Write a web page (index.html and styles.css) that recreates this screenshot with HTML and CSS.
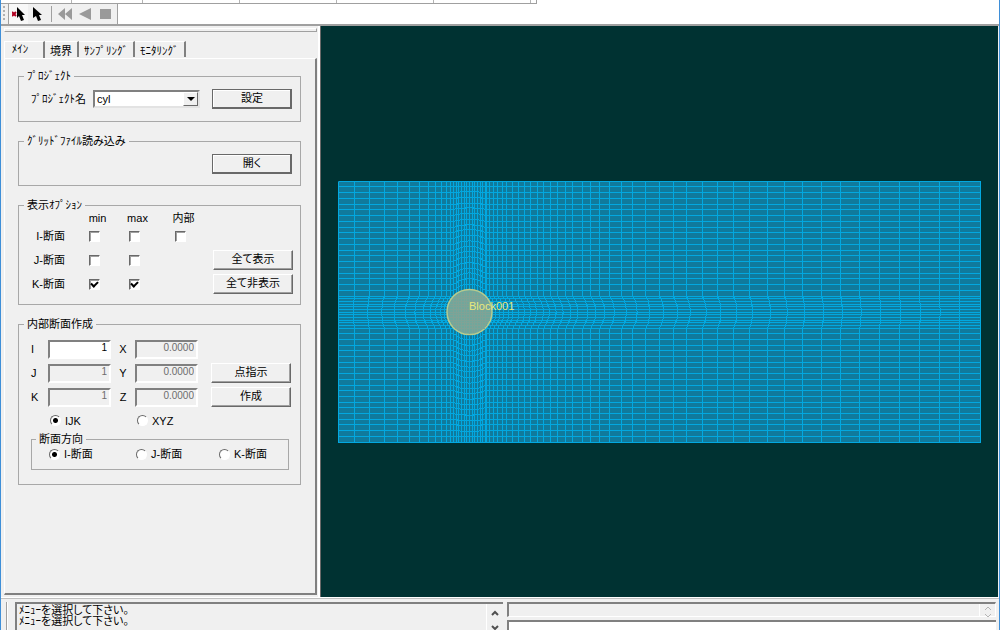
FILE: index.html
```html
<!DOCTYPE html>
<html lang="ja">
<head>
    <meta charset="UTF-8">
    <meta name="viewport" content="width=device-width, initial-scale=1.0">
    <title>cyl</title>
    <link rel="stylesheet" href="styles.css">
</head>
<body>
    <div class="menu-edge">
        <span></span><span></span><span></span><span></span><span></span><span></span>
    </div>
    <div class="toolbar-row">
        <div class="toolbar">
            <i class="grip"></i>
            <button class="tool pressed" aria-label="選択解除">
                <svg width="14" height="14" viewBox="0 0 14 14">
                    <path d="M0 5l4 4M4 5l-4 4" stroke="#b00020" stroke-width="2"/>
                    <path d="M5 0v11l2-2 2 5 3-1-2-5h3z" fill="#000"/>
                </svg>
            </button>
            <button class="tool" aria-label="選択">
                <svg width="14" height="14" viewBox="0 0 14 14">
                    <path d="M2 0v11l3-2 2 5 3-1-2-5h3z" fill="#000"/>
                </svg>
            </button>
            <i class="divider"></i>
            <button class="tool" aria-label="先頭へ">
                <svg width="14" height="14" viewBox="0 0 14 14">
                    <path d="M7 1v12L0 7zM14 1v12L7 7z" fill="#9a9a9a"/>
                </svg>
            </button>
            <button class="tool" aria-label="逆再生">
                <svg width="14" height="14" viewBox="0 0 14 14">
                    <path d="M13 1v12L1 7z" fill="#9a9a9a"/>
                </svg>
            </button>
            <button class="tool" aria-label="停止">
                <svg width="14" height="14" viewBox="0 0 14 14">
                    <path d="M2 2h11v10H2z" fill="#9a9a9a"/>
                </svg>
            </button>
        </div>
    </div>

    <main class="workspace">
        <aside class="sidebar">
            <div class="dock-bar"></div>
            <div class="tabs" role="tablist">
                <button class="tab active" role="tab" aria-selected="true">ﾒｲﾝ</button>
                <button class="tab" role="tab">境界</button>
                <button class="tab" role="tab">ｻﾝﾌﾟﾘﾝｸﾞ</button>
                <button class="tab" role="tab">ﾓﾆﾀﾘﾝｸﾞ</button>
            </div>
            <form class="page">
                <fieldset class="project">
                    <legend>ﾌﾟﾛｼﾞｪｸﾄ</legend>
                    <label for="projectName">ﾌﾟﾛｼﾞｪｸﾄ名</label>
                    <div class="combo">
                        <select id="projectName"><option>cyl</option></select>
                        <span class="combo-arrow"></span>
                    </div>
                    <button type="button" class="btn strong">設定</button>
                </fieldset>

                <fieldset class="grid-file">
                    <legend>ｸﾞﾘｯﾄﾞﾌｧｲﾙ読み込み</legend>
                    <button type="button" class="btn strong">開く</button>
                </fieldset>

                <fieldset class="options">
                    <legend>表示ｵﾌﾟｼｮﾝ</legend>
                    <div class="option-grid head">
                        <span></span><span>min</span><span>max</span><span>内部</span>
                    </div>
                    <div class="option-grid">
                        <span class="name">I-断面</span>
                        <input type="checkbox" aria-label="I-断面 min">
                        <input type="checkbox" aria-label="I-断面 max">
                        <input type="checkbox" aria-label="I-断面 内部">
                    </div>
                    <div class="option-grid">
                        <span class="name">J-断面</span>
                        <input type="checkbox" aria-label="J-断面 min">
                        <input type="checkbox" aria-label="J-断面 max">
                        <span></span>
                        <button type="button" class="btn">全て表示</button>
                    </div>
                    <div class="option-grid">
                        <span class="name">K-断面</span>
                        <input type="checkbox" aria-label="K-断面 min" checked>
                        <input type="checkbox" aria-label="K-断面 max" checked>
                        <span></span>
                        <button type="button" class="btn">全て非表示</button>
                    </div>
                </fieldset>

                <fieldset class="section">
                    <legend>内部断面作成</legend>
                    <div class="coord-row">
                        <label for="i">I</label><input class="field" id="i" value="1">
                        <label for="x">X</label><input class="field" id="x" value="0.0000" disabled>
                    </div>
                    <div class="coord-row">
                        <label for="j">J</label><input class="field" id="j" value="1" disabled>
                        <label for="y">Y</label><input class="field" id="y" value="0.0000" disabled>
                        <button type="button" class="btn">点指示</button>
                    </div>
                    <div class="coord-row">
                        <label for="k">K</label><input class="field" id="k" value="1" disabled>
                        <label for="z">Z</label><input class="field" id="z" value="0.0000" disabled>
                        <button type="button" class="btn">作成</button>
                    </div>
                    <div class="radio-row">
                        <label><input type="radio" name="mode" checked>IJK</label>
                        <label><input type="radio" name="mode">XYZ</label>
                    </div>
                    <fieldset class="direction">
                        <legend>断面方向</legend>
                        <div class="direction-row">
                            <label><input type="radio" name="dir" checked>I-断面</label>
                            <label><input type="radio" name="dir">J-断面</label>
                            <label><input type="radio" name="dir">K-断面</label>
                        </div>
                    </fieldset>
                </fieldset>
            </form>
        </aside>

        <section class="view">
            <svg class="mesh" viewBox="321 26 677 571">
                <rect class="mesh-fill" x="338" y="181" width="643" height="262"/>
                <path class="mesh-line" id="meshLines"/>
                <circle class="cylinder" cx="469.5" cy="312" r="22.5"/>
                <path class="cylinder-line" id="cylinderLines"/>
                <text class="block-name" x="469" y="310">Block001</text>
            </svg>
        </section>
    </main>

    <footer class="status">
        <i class="status-grip"></i>
        <div class="log">
            <div class="log-text">ﾒﾆｭｰを選択して下さい。<br>ﾒﾆｭｰを選択して下さい。</div>
            <div class="scroll">
                <button aria-label="上へ"><svg width="8" height="6" viewBox="0 0 8 6"><path d="M1 5l3-3 3 3"/></svg></button>
                <button aria-label="下へ"><svg width="8" height="6" viewBox="0 0 8 6"><path d="M1 1l3 3 3-3"/></svg></button>
            </div>
        </div>
        <div class="command">
            <div class="history">
                <div class="scroll small">
                    <button aria-label="履歴 上へ" disabled><svg width="8" height="5" viewBox="0 0 8 5"><path d="M1 4l3-3 3 3"/></svg></button>
                    <button aria-label="履歴 下へ" disabled><svg width="8" height="5" viewBox="0 0 8 5"><path d="M1 1l3 3 3-3"/></svg></button>
                </div>
            </div>
            <input class="command-input" aria-label="コマンド">
        </div>
    </footer>
    <script src="mesh.js"></script>
</body>
</html>
```

FILE: styles.css
```css
* {
    box-sizing: border-box;
}
body {
    margin: 0;
    height: 100vh;
    display: flex;
    flex-direction: column;
    overflow: hidden;
    background: #f0f0f0;
    border-left: 1px solid #3f8fd8;
    border-right: 1px solid #3f8fd8;
    color: #000;
    font-family: "Liberation Sans", "Noto Sans CJK JP", sans-serif;
    font-size: 11px;
    font-feature-settings: "palt";
    line-height: 14px;
}
button, input, select {
    font: inherit;
    font-feature-settings: inherit;
    color: inherit;
    margin: 0;
    padding: 0;
    border-radius: 0;
}

/* toolbars */
.menu-edge {
    flex: none;
    display: flex;
    height: 4px;
    width: 536px;
    border-bottom: 1px solid #a0a0a0;
    border-right: 1px solid #a0a0a0;
}
.menu-edge span {
    width: 71px;
    border-right: 1px solid #b4b4b4;
}
.menu-edge span:nth-child(n+3) {
    width: 97px;
}
.toolbar-row {
    flex: none;
    height: 22px;
    background: #fff;
    border-bottom: 2px solid #a0a0a0;
    box-shadow: 0 -4px 0 #fff;
    z-index: -1;
}
.toolbar {
    display: flex;
    align-items: center;
    width: 117px;
    height: 20px;
    background: #f0f0f0;
    border-right: 1px solid #a0a0a0;
}
.grip {
    width: 2px;
    height: 16px;
    margin: 0 3px 0 2px;
    background: repeating-linear-gradient(#b0b0b0 0 2px, #f0f0f0 2px 4px);
}
.divider {
    width: 1px;
    height: 16px;
    margin: 0 3px;
    background: #a0a0a0;
}
.tool {
    display: flex;
    align-items: center;
    justify-content: center;
    width: 20px;
    height: 20px;
    background: none;
    border: none;
}
.tool.pressed {
    background: #f8f8f8;
    border-left: 1px solid #a0a0a0;
}

/* workspace */
.workspace {
    flex: 1;
    min-height: 0;
    display: flex;
}
.sidebar {
    flex: none;
    width: 320px;
    display: flex;
    flex-direction: column;
    padding: 2px 3px 2px 3px;
    border-right: 1px solid #696969;
    box-shadow: inset -2px 0 0 #fff;
}
.dock-bar {
    height: 4px;
    border: 1px solid #fff;
    border-right-color: #a0a0a0;
    border-bottom-color: #a0a0a0;
}
.tabs {
    display: flex;
    height: 26px;
    padding-top: 9px;
}
.tab {
    padding: 2px 5px 0 5px;
    background: none;
    border: none;
    border-top: 1px solid #fff;
    border-right: 2px solid #808080;
    height: 16px;
    line-height: 12px;
    white-space: nowrap;
}
.tab.active {
    width: 41px;
    height: 18px;
    padding: 0 14px 4px 6px;
    border-left: 1px solid #fff;
}
.page {
    flex: 1;
    padding: 10px 14px 0 13px;
    border-top: 1px solid #fff;
    border-left: 1px solid #fff;
    border-right: 2px solid #808080;
    border-bottom: 2px solid #808080;
}
fieldset {
    margin: 0 0 12px;
    min-width: 0;
    border: 1px solid #a8a8a8;
}
legend {
    padding: 0 3px;
    margin-left: -7px;
}
.project, .grid-file {
    display: flex;
    align-items: center;
    justify-content: flex-end;
    padding: 6px 8px 12px 12px;
}
.grid-file {
    padding-bottom: 11px;
}
.project label {
    flex: 1;
}
.combo {
    position: relative;
    width: 107px;
    height: 18px;
    margin-right: 12px;
}
.combo select {
    display: block;
    width: 100%;
    height: 100%;
    padding: 0 0 0 2px;
    appearance: none;
    background: #fff;
    border: 2px solid;
    border-color: #808080 #e3e3e3 #e3e3e3 #808080;
}
.combo-arrow {
    position: absolute;
    top: 2px;
    right: 2px;
    width: 15px;
    height: 14px;
    background: #f0f0f0;
    border: 1px solid;
    border-color: #fff #696969 #696969 #fff;
    pointer-events: none;
}
.combo-arrow::after {
    content: "";
    position: absolute;
    left: 3px;
    top: 4px;
    border: 4px solid transparent;
    border-top-color: #000;
    border-bottom: 0;
}
.btn {
    width: 80px;
    height: 20px;
    padding-bottom: 2px;
    line-height: 14px;
    background: #f0f0f0;
    border: 1px solid;
    border-color: #fff #696969 #696969 #fff;
    box-shadow: inset -1px -1px 0 #a0a0a0;
}
.btn.strong {
    border-color: #696969;
    box-shadow: inset -1px -1px 0 #696969, inset 1px 1px 0 #fff;
}

.options {
    padding: 0 7px 8px 12px;
}
.option-grid {
    display: grid;
    grid-template-columns: 43px 40px 40px 52px 1fr;
    align-items: center;
    justify-items: center;
    height: 24px;
}
.option-grid.head {
    height: 12px;
    line-height: 11px;
}
.option-grid.head span {
    padding-left: 7px;
}
.option-grid .name {
    justify-self: start;
    width: 34px;
    text-align: right;
    white-space: nowrap;
}
.option-grid .btn {
    justify-self: end;
}
input[type="checkbox"] {
    appearance: none;
    width: 11px;
    height: 11px;
    background: #fff;
    border: 1px solid;
    border-color: #696969 #fff #fff #696969;
    box-shadow: inset 1px 1px 0 #a0a0a0;
}
input[type="checkbox"]:checked::after {
    content: "";
    display: block;
    box-sizing: border-box;
    width: 7px;
    height: 5px;
    margin: 1px 0 0 1px;
    border-left: 2px solid #000;
    border-bottom: 2px solid #000;
    transform: rotate(-45deg);
}
input[type="radio"] {
    appearance: none;
    width: 11px;
    height: 11px;
    margin-right: 4px;
    border: 1px solid;
    border-color: #696969 #fff #fff #696969;
    border-radius: 50%;
    background: #fff;
}
input[type="radio"]:checked {
    background: radial-gradient(circle, #000 2px, #fff 3px);
}

.section {
    padding: 6px 11px 14px 12px;
    margin-bottom: 0;
}
.coord-row {
    display: grid;
    grid-template-columns: 17px 63px 24px 63px 13px 80px;
    align-items: center;
    height: 24px;
}
.coord-row label:nth-of-type(2) {
    text-align: center;
}
.coord-row .btn {
    grid-column: 6;
}
.field {
    width: 100%;
    height: 19px;
    padding: 0 2px 3px;
    background: #fff;
    border: 2px solid;
    border-color: #808080 #fff #fff #808080;
    font-size: 10px;
    text-align: right;
}
.field:disabled {
    background: #f0f0f0;
    color: #6d6d6d;
}
.radio-row, .direction-row {
    display: grid;
    grid-template-columns: 87px 83px 1fr;
    align-items: center;
    height: 23px;
    padding-left: 19px;
}
.radio-row label, .direction-row label {
    display: flex;
    align-items: center;
    white-space: nowrap;
}
.direction {
    margin: 0;
    padding: 0 0 7px;
}
.direction legend {
    margin-left: 4px;
}
.direction-row {
    height: 16px;
    padding-left: 17px;
}

/* 3D view */
.view {
    flex: 1;
    min-width: 0;
    background: #003232;
    border-right: 1px solid #f0f0f0;
}
.mesh {
    display: block;
    width: 100%;
    height: 100%;
}
.mesh-fill {
    fill: #107a9c;
}
.mesh-line {
    fill: none;
    stroke: #02a8e0;
    shape-rendering: crispEdges;
}
.cylinder {
    fill: #70a79c;
    stroke: #b9cb8c;
    stroke-width: 1.5;
}
.cylinder-line {
    fill: none;
    stroke: #7fa396;
    shape-rendering: crispEdges;
}
.block-name {
    fill: #e8e87c;
    font-size: 11px;
}

/* status area */
.status {
    flex: none;
    display: flex;
    height: 33px;
    padding: 4px 3px 0 5px;
    border-top: 1px solid #fff;
    box-shadow: inset 0 1px 0 #c0c0c0;
}
.status-grip {
    width: 2px;
    margin-right: 7px;
    border-left: 1px solid #a0a0a0;
    border-right: 1px solid #fff;
}
.log {
    flex: 1;
    min-width: 0;
    display: flex;
    justify-content: space-between;
    border-top: 2px solid #808080;
    border-left: 2px solid #808080;
}
.log-text {
    padding: 1px 0 0 2px;
    line-height: 11px;
}
.scroll {
    display: flex;
    flex-direction: column;
    align-items: center;
    gap: 9px;
    width: 17px;
    padding-top: 6px;
    border-left: 1px solid #fff;
}
.scroll button {
    display: flex;
    background: none;
    border: none;
}
.scroll path {
    fill: none;
    stroke: #505050;
    stroke-width: 2;
}
.scroll.small {
    gap: 2px;
    padding-top: 2px;
    width: 16px;
}
.scroll.small path {
    stroke: #b4b4b4;
    stroke-width: 1;
}
.command {
    flex: 1 1 4px;
    min-width: 0;
    display: flex;
    flex-direction: column;
    gap: 3px;
    margin-left: 4px;
}
.history {
    display: flex;
    justify-content: flex-end;
    height: 15px;
    border: 1px solid #fff;
    border-top: 2px solid #808080;
    border-left: 2px solid #808080;
}
.command-input {
    width: 100%;
    height: 20px;
    background: #fff;
    border: none;
    border-top: 2px solid #808080;
    border-left: 2px solid #808080;
}
```

FILE: mesh.js
```js
// Structured grid around a cylinder: straight lines outside, bulged lines
// in the two bands that cross at the cylinder.
const cx = 469.5, cy = 312, radius = 23, half = 16;
const left = 338, right = 980, top_ = 181, bottom = 442;

const xLeft = [338, 354, 369, 384, 397, 409, 419, 428, 435, 441, 446, 450, 453];
const xRight = [486, 489, 493, 497, 502, 506, 512, 518, 524, 530, 537, 543, 550,
    557, 565, 572, 582, 590, 599, 609, 621, 632, 645, 659, 673, 686, 702, 717,
    733, 749, 767, 784, 802, 821, 840, 859, 879, 899, 919, 939, 959, 980];

function range(from, to, count) {
    const out = [];
    for (let i = 0; i <= count; i++) out.push(from + (to - from) * i / count);
    return out;
}
const yTop = range(top_, cy - half, 20);
const yBottom = range(cy + half, bottom, 20);
const bandX = range(cx - half, cx + half, 12);
const bandY = range(cy - half, cy + half, 12);

function snap(v) {
    return Math.floor(v) + 0.5;
}
// zero at the corners of the band, largest in its middle
function bulge(d) {
    return Math.sqrt(radius * radius - d * d) - Math.sqrt(radius * radius - half * half);
}
function poly(points) {
    return 'M' + points.map(p => snap(p[0]) + ' ' + snap(p[1])).join('L');
}

let d = '';

// vertical lines, pushed away from the cylinder inside the horizontal band
[...xLeft, ...xRight].forEach(x => {
    const side = x < cx ? -1 : 1;
    const end = side < 0 ? left : right;
    const k = (end - x) / (end - (cx + side * half));
    const mid = bandY.map(y => [x + side * Math.round(bulge(y - cy) * k), y]);
    d += poly([[x, top_], ...mid, [x, bottom]]);
});

// horizontal lines, pushed away inside the vertical band
[...yTop, ...yBottom].forEach(y => {
    const side = y < cy ? -1 : 1;
    const end = side < 0 ? top_ : bottom;
    const k = (end - y) / (end - (cy + side * half));
    const mid = bandX.map(x => [x, Math.floor(y) + side * Math.round(bulge(x - cx) * k)]);
    d += poly([[left, y], ...mid, [right, y]]);
});

// lines that run along the bands and stop at the cylinder
let inner = '';
bandX.forEach(x => {
    const h = Math.sqrt(radius * radius - (x - cx) * (x - cx));
    d += poly([[x, top_], [x, cy - h]]) + poly([[x, cy + h], [x, bottom]]);
    inner += poly([[x, cy - h + 2], [x, cy + h - 2]]);
});
bandY.forEach(y => {
    const w = Math.sqrt(radius * radius - (y - cy) * (y - cy));
    d += poly([[left, y], [cx - w, y]]) + poly([[cx + w, y], [right, y]]);
    inner += poly([[cx - w + 2, y], [cx + w - 2, y]]);
});

document.getElementById('meshLines').setAttribute('d', d);
document.getElementById('cylinderLines').setAttribute('d', inner);
```
